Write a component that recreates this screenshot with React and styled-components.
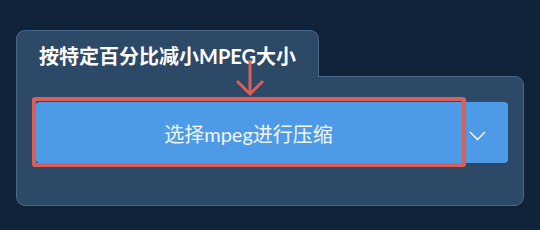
import React from 'react';
import styled, { createGlobalStyle } from 'styled-components';

const GlobalStyle = createGlobalStyle`
  html, body {
    margin: 0;
    padding: 0;
    background-color: #10233a;
  }
  body {
    font-family: "Lato", "Noto Sans CJK SC", sans-serif;
  }
`;

const Page = styled.div`
  width: 540px;
  height: 230px;
  box-sizing: border-box;
  padding: 30px 16px 0 16px;
  background-color: #10233a;
`;

const Card = styled.div`
  position: relative;
  width: 508px;
  display: flex;
  flex-direction: column;
`;

const Tab = styled.div`
  position: relative;
  z-index: 1;
  width: 303px;
  height: 47px;
  box-sizing: border-box;
  margin-bottom: -1px;
  padding: 13px 0 0 22px;
  background-color: #2c4968;
  border: 1px solid #4a6789;
  border-bottom: none;
  border-radius: 9px 9px 0 0;
  color: #ffffff;
  font-size: 20px;
  font-weight: 700;
  line-height: 24px;
  white-space: nowrap;
`;

const Body = styled.div`
  box-sizing: border-box;
  height: 130px;
  padding: 25px 15px 0 19px;
  background-color: #2c4968;
  border: 1px solid #4a6789;
  border-radius: 0 9px 9px 9px;
`;

const ButtonGroup = styled.div`
  display: flex;
  height: 61px;
  border-radius: 4px;
  background-color: #4d9be6;
`;

const MainButton = styled.div`
  position: relative;
  flex: 1;
  display: flex;
  align-items: center;
  justify-content: center;
  color: #f2f6fa;
  font-size: 20px;
  font-weight: 400;
  padding-top: 1px;
`;

const DropButton = styled.div`
  width: 47px;
  display: flex;
  align-items: center;
  padding-left: 8px;
  box-sizing: border-box;
  padding-top: 6px;
`;

const Highlight = styled.div`
  position: absolute;
  top: -5px;
  left: -4px;
  right: -5px;
  bottom: -4px;
  border: 4px solid #d9605a;
  border-radius: 3px;
  box-sizing: border-box;
  pointer-events: none;
`;

const Arrow = styled.svg`
  position: absolute;
  z-index: 2;
  left: 219px;
  top: 30px;
`;

const Chevron = () => (
  <svg width="17" height="10" viewBox="0 0 17 10">
    <path d="M1 1 L8.5 8.5 L16 1" fill="none" stroke="#ffffff" strokeWidth="1.4" />
  </svg>
);

export default function App() {
  return (
    <Page>
      <GlobalStyle />
      <Card>
        <Tab>按特定百分比减小MPEG大小</Tab>
        <Body>
          <ButtonGroup>
            <MainButton>
              选择mpeg进行压缩
              <Highlight />
            </MainButton>
            <DropButton>
              <Chevron />
            </DropButton>
          </ButtonGroup>
        </Body>
        <Arrow width="30" height="37" viewBox="0 0 30 37">
          <path d="M15 0 L15 34" stroke="#d9605a" strokeWidth="3" fill="none" />
          <path d="M2 21 L15 34 L28 21" stroke="#d9605a" strokeWidth="3" fill="none" />
        </Arrow>
      </Card>
    </Page>
  );
}
